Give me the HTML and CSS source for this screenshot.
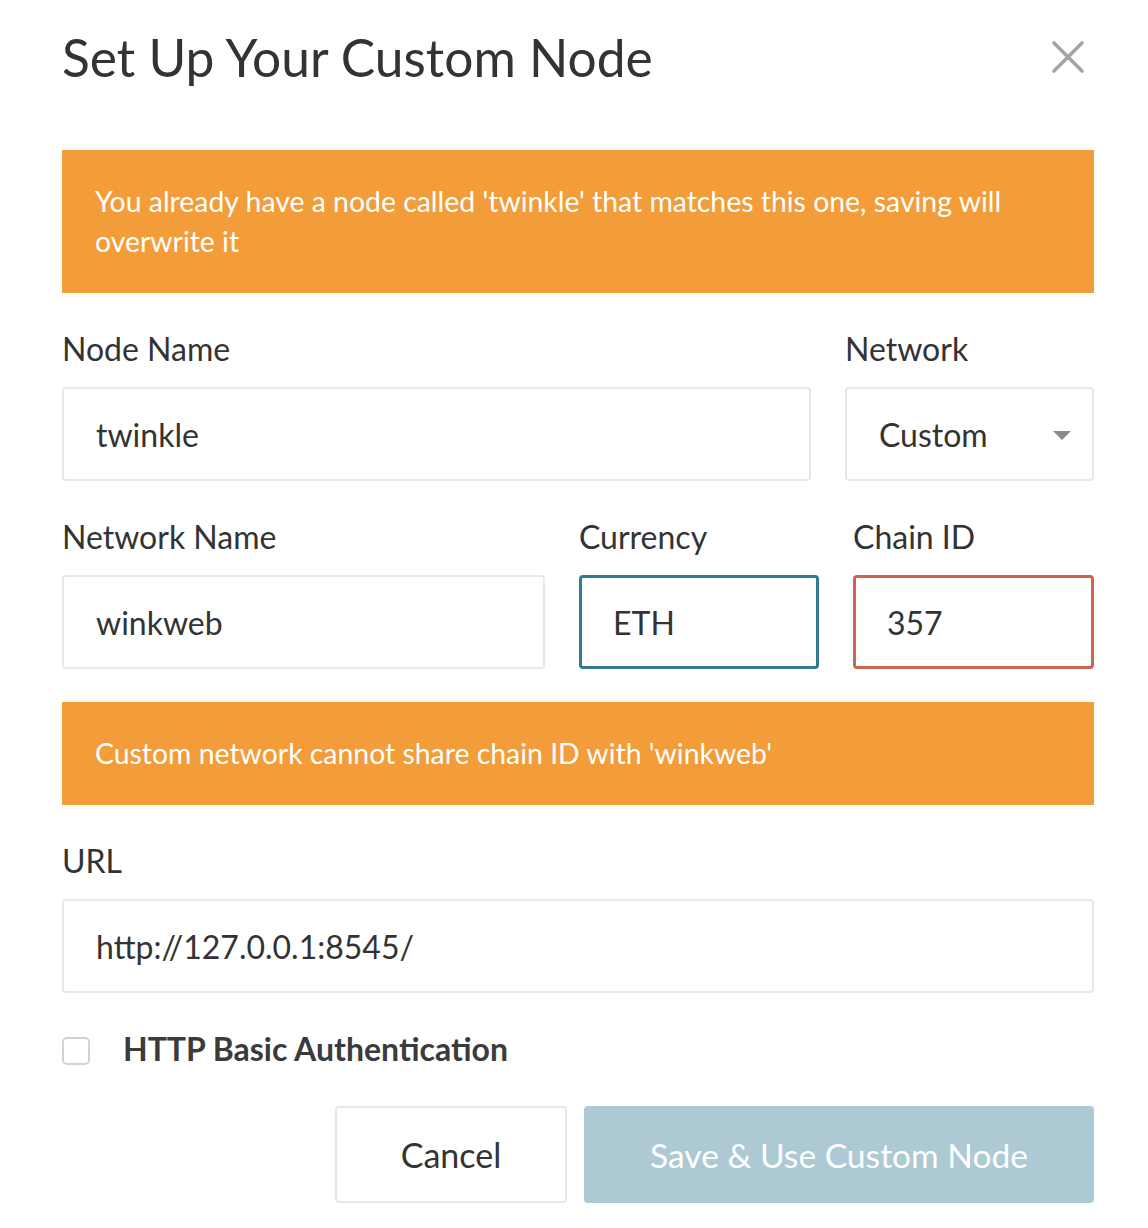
FILE: index.html
```html
<!DOCTYPE html>
<html lang="en">
<head>
<meta charset="utf-8">
<title>Set Up Your Custom Node</title>
<link rel="stylesheet" href="styles.css">
</head>
<body>
<div class="modal">
  <div class="header">
    <h1 class="title">Set Up Your Custom Node</h1>
    <button class="close" aria-label="Close">
      <svg width="34" height="34" viewBox="0 0 34 34"><path d="M3 3 L31 31 M31 3 L3 31" stroke="#a3a3a3" stroke-width="3.6" stroke-linecap="round" fill="none"/></svg>
    </button>
  </div>

  <div class="alert alert-top">You already have a node called 'twinkle' that matches this one, saving will overwrite it</div>

  <div class="row row-1">
    <div class="field">
      <label class="label">Node Name</label>
      <input class="input" type="text" value="twinkle">
    </div>
    <div class="field">
      <label class="label">Network</label>
      <div class="input select">
        <span>Custom</span>
        <span class="caret"></span>
      </div>
    </div>
  </div>

  <div class="row row-2">
    <div class="field">
      <label class="label">Network Name</label>
      <input class="input" type="text" value="winkweb">
    </div>
    <div class="field">
      <label class="label">Currency</label>
      <input class="input input-focus" type="text" value="ETH">
    </div>
    <div class="field">
      <label class="label">Chain ID</label>
      <input class="input input-error" type="text" value="357">
    </div>
  </div>

  <div class="alert alert-mid">Custom network cannot share chain ID with 'winkweb'</div>

  <div class="field field-url">
    <label class="label">URL</label>
    <input class="input" type="text" value="http://127.0.0.1:8545/">
  </div>

  <label class="check-row">
    <span class="checkbox"></span>
    <span class="check-label">HTTP Basic Authentication</span>
  </label>

  <div class="actions">
    <button class="btn btn-cancel">Cancel</button>
    <button class="btn btn-save">Save &amp; Use Custom Node</button>
  </div>
</div>
</body>
</html>
```

FILE: styles.css
```css
* { box-sizing: border-box; }
html, body { margin: 0; padding: 0; background: #fff; }
body {
  font-family: Lato, "Open Sans", "Liberation Sans", sans-serif;
  color: #333;
}
.modal {
  width: 1032px;
  margin-left: 62px;
  padding-top: 20px;
}
.header {
  display: flex;
  justify-content: space-between;
  align-items: center;
  height: 74px;
  margin-bottom: 56px;
}
.title {
  margin: 0;
  font-size: 51.5px;
  font-weight: 400;
  line-height: 74px;
  color: #333;
}
.close {
  border: 0;
  background: none;
  padding: 0;
  margin-right: 9px;
  width: 34px;
  height: 34px;
  display: flex;
  cursor: pointer;
}
.alert {
  background: #f29d39;
  color: #fff;
  font-size: 28.4px;
  line-height: 40px;
  padding: 31px 32px 32px 33px;
}
.row {
  display: grid;
  column-gap: 34px;
  margin-top: 36px;
}
.row-1 { grid-template-columns: 749px 249px; }
.row-2 { grid-template-columns: 483px 240px 241px; }
.field {
  display: flex;
  flex-direction: column;
}
.label {
  font-size: 32px;
  line-height: 40px;
  margin-bottom: 18px;
  color: #333;
}
.input {
  height: 94px;
  width: 100%;
  border: 2px solid #e5e9ed;
  border-radius: 4px;
  padding: 0 32px;
  font-family: Lato, "Open Sans", "Liberation Sans", sans-serif;
  font-size: 32px;
  color: #333;
  background: #fff;
  outline: none;
}
.input-focus { border: 3px solid #337a93; padding-left: 31px; }
.input-error { border: 3px solid #cf6351; padding-left: 31px; }
.select {
  display: flex;
  align-items: center;
  justify-content: space-between;
  padding-right: 21px;
}
.caret {
  width: 0;
  height: 0;
  margin-top: 3px;
  border-left: 9px solid transparent;
  border-right: 9px solid transparent;
  border-top: 9px solid #8a8a8a;
}
.alert-mid {
  margin-top: 33px;
}
.field-url { margin-top: 36px; }
.check-row {
  display: flex;
  align-items: center;
  margin-top: 35px;
  height: 40px;
}
.checkbox {
  width: 28px;
  height: 28px;
  border: 2px solid #d2d2d2;
  border-radius: 5px;
  margin-right: 33px;
  margin-top: 6px;
}
.check-label {
  font-size: 32px;
  font-weight: 700;
  color: #3b3b3b;
}
.actions {
  display: flex;
  justify-content: flex-end;
  gap: 17px;
  margin-top: 38px;
}
.btn {
  height: 97px;
  font-family: Lato, "Open Sans", "Liberation Sans", sans-serif;
  font-size: 34px;
  border-radius: 4px;
  cursor: pointer;
}
.btn-cancel {
  width: 232px;
  background: #fff;
  border: 2px solid #e5e9ed;
  color: #333;
}
.btn-save {
  width: 510px;
  font-size: 33.6px;
  background: #adc9d4;
  border: 0;
  color: #fff;
}
```
